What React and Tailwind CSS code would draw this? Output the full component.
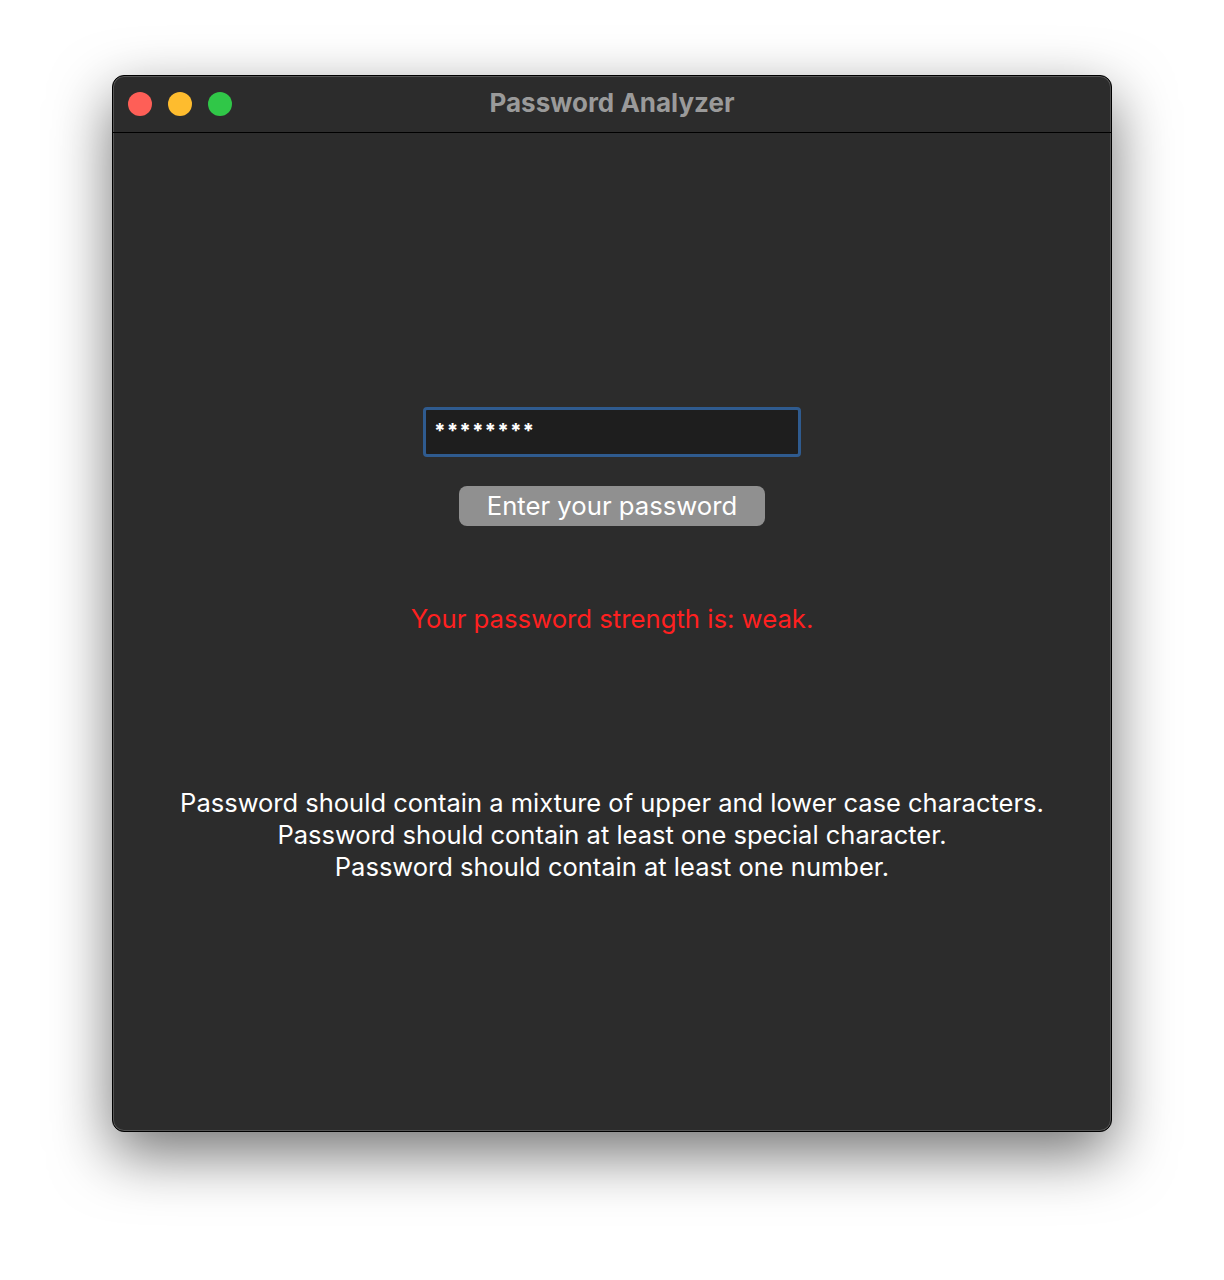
import React from "react";

const font = { fontFamily: "Inter, 'Noto Sans', sans-serif" };

const App = () => {
  const tips = [
    "Password should contain a mixture of upper and lower case characters.",
    "Password should contain at least one special character.",
    "Password should contain at least one number.",
  ];

  return (
    <div
      className="w-[1224px] h-[1280px] bg-white pt-[75px] pl-[112px]"
      style={font}
    >
      <div className="w-[1000px] h-[1057px] rounded-[12px] bg-[#2c2c2c] border border-black shadow-[0_22px_60px_rgba(0,0,0,0.55),inset_0_0_0_1px_#555] overflow-hidden flex flex-col">
        {/* title bar */}
        <div className="relative h-[57px] shrink-0 flex items-center border-b border-black">
          <div className="flex items-center gap-4 pl-[15px]">
            <span className="w-6 h-6 rounded-full bg-[#fe5f57]" />
            <span className="w-6 h-6 rounded-full bg-[#febc2e]" />
            <span className="w-6 h-6 rounded-full bg-[#30c748]" />
          </div>
          <div className="absolute inset-0 flex items-center justify-center pb-[3px] pointer-events-none">
            <span className="text-[26px] font-bold text-[#9a9a9a]">
              Password Analyzer
            </span>
          </div>
        </div>

        {/* content */}
        <div className="flex flex-col items-center pt-[274px]">
          <div className="w-[378px] h-[50px] rounded-[4px] border-[3px] border-[#2f5b8f] bg-[#1e1e1e] px-[8px] pt-[10px]">
            <span className="text-white text-[20px] font-extrabold leading-none tracking-[1px]">
              ********
            </span>
          </div>
          <button className="mt-[29px] w-[306px] h-[40px] rounded-[8px] bg-[#909090] text-white text-[25.7px] leading-none">
            Enter your password
          </button>
          <p className="mt-[77px] text-[#ff2020] text-[25.7px] leading-[32px]">
            Your password strength is: weak.
          </p>
          <div className="mt-[152px] flex flex-col items-center text-white text-[25.5px] leading-[32px]">
            {tips.map((t) => (
              <p key={t}>{t}</p>
            ))}
          </div>
        </div>
      </div>
    </div>
  );
};

export default App;
